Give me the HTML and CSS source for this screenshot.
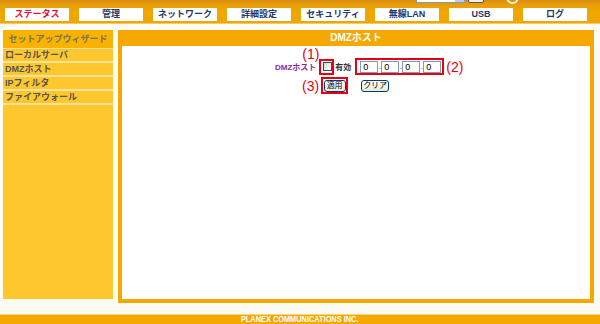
FILE: index.html
```html
<!DOCTYPE html>
<html lang="ja">
<head>
    <meta charset="UTF-8">
    <title>DMZホスト</title>
    <link rel="stylesheet" href="styles.css">
</head>
<body>
    <div class="header">
        <div class="topline">
            <span class="lang-select"><i class="lang-arrow"></i></span>
            <span class="lang-btn"></span>
            <span class="ring"></span>
        </div>
        <ul class="nav">
            <li class="active">ステータス</li>
            <li>管理</li>
            <li>ネットワーク</li>
            <li>詳細設定</li>
            <li>セキュリティ</li>
            <li>無線LAN</li>
            <li>USB</li>
            <li>ログ</li>
        </ul>
    </div>

    <div class="layout">
        <div class="sidebar">
            <div class="side-title">セットアップウィザード</div>
            <div class="side-item first">ローカルサーバ</div>
            <div class="side-item">DMZホスト</div>
            <div class="side-item">IPフィルタ</div>
            <div class="side-item last">ファイアウォール</div>
        </div>

        <div class="panel">
            <div class="panel-title">DMZホスト</div>
            <div class="panel-body">
                <div class="form-row">
                    <span class="field-label">DMZホスト</span>
                    <span class="mark mark-check">
                        <span class="note note-over">(1)</span>
                        <input type="checkbox" class="check">
                    </span>
                    <span class="check-label">有効</span>
                    <span class="mark mark-ip">
                        <input type="text" class="ip" value="0"><span class="dot">.</span><input type="text" class="ip" value="0"><span class="dot">.</span><input type="text" class="ip" value="0"><span class="dot">.</span><input type="text" class="ip" value="0">
                    </span>
                    <span class="note">(2)</span>
                </div>
                <div class="form-row row-buttons">
                    <span class="note">(3)</span>
                    <span class="mark mark-btn"><button class="btn btn-apply">適用</button></span>
                    <button class="btn btn-clear">クリア</button>
                </div>
            </div>
        </div>
    </div>

    <div class="footer"><span class="footer-text">PLANEX COMMUNICATIONS INC.</span></div>
</body>
</html>
```

FILE: styles.css
```css
body {
    margin: 0;
    width: 600px;
    height: 324px;
    overflow: hidden;
    background: #fdfcf4;
    font-family: "Liberation Sans", "Noto Sans CJK JP", sans-serif;
    color: #333;
}

/* ヘッダー */
.header {
    height: 24px;
    background: linear-gradient(to bottom, #d98a12 0, #e99e08 5px, #efa800 12px, #eea600 100%);
    border-bottom: 1px solid #f7c860;
    box-sizing: border-box;
}
.topline {
    height: 8px;
    display: flex;
    align-items: flex-end;
    overflow: hidden;
}
.lang-select {
    position: relative;
    margin: 0 0 5px 416px;
    width: 49px;
    height: 12px;
    box-sizing: border-box;
    background: #fff;
    border: 1px solid #7f9db9;
}
.lang-arrow {
    position: absolute;
    right: 0;
    top: 0;
    width: 9px;
    height: 10px;
    background: #b8cdf0;
}
.lang-btn {
    margin: 0 0 5px 3px;
    width: 16px;
    height: 12px;
    box-sizing: border-box;
    border: 1px solid #556;
    border-radius: 2px;
    background: #f0f0ea;
}
.ring {
    margin: 0 0 4px 22px;
    width: 9px;
    height: 9px;
    border: 2px solid #fff3d8;
    border-radius: 50%;
}
.nav {
    list-style: none;
    margin: 0;
    padding: 0 0 0 5px;
    display: flex;
    gap: 10px;
}
.nav li {
    width: 64px;
    height: 13px;
    line-height: 13px;
    background: #fff;
    text-align: center;
    font-size: 9px;
    font-weight: bold;
    color: #22386a;
}
.nav li.active {
    color: #e8102c;
}

/* 本体 */
.layout {
    display: flex;
    align-items: flex-start;
    gap: 5px;
    padding: 6px 0 0 3px;
}
.sidebar {
    width: 110px;
    height: 269px;
    background: #ffc72e;
}
.side-title {
    height: 18px;
    line-height: 18px;
    background: #f7b300;
    text-align: center;
    font-size: 9px;
    font-weight: bold;
    color: #7b705c;
}
.side-item {
    height: 12px;
    line-height: 12px;
    padding-left: 2px;
    border-top: 2px solid #ffe29a;
    font-size: 9px;
    font-weight: bold;
    color: #555;
}
.side-item.first {
    border-top-width: 1px;
}
.side-item.last {
    border-bottom: 2px solid #ffe29a;
}

.panel {
    width: 476px;
    height: 273px;
    box-sizing: border-box;
    padding: 0 4px 4px;
    background: #f5a800;
    display: flex;
    flex-direction: column;
}
.panel-title {
    height: 16px;
    line-height: 16px;
    text-align: center;
    color: #fff;
    font-size: 10px;
    font-weight: bold;
}
.panel-body {
    flex: 1;
    background: #fff;
    padding: 12px 0 0 153px;
}

/* フォーム */
.form-row {
    display: flex;
    align-items: center;
    height: 17px;
}
.row-buttons {
    margin-top: 2px;
    padding-left: 27px;
}
.field-label {
    flex-shrink: 0;
    white-space: nowrap;
    font-size: 8px;
    font-weight: bold;
    color: #8a2aa0;
    margin-right: 3px;
}
.mark {
    position: relative;
    flex-shrink: 0;
    box-sizing: border-box;
    border: 2px solid #e60012;
    display: flex;
    align-items: center;
}
.mark-check {
    width: 15px;
    height: 16px;
    padding-left: 2px;
}
.check {
    appearance: none;
    margin: 0;
    width: 9px;
    height: 9px;
    border: 1px solid #1c5180;
    background: linear-gradient(135deg, #d8d8d0, #fff);
}
.check-label {
    flex-shrink: 0;
    white-space: nowrap;
    font-size: 8px;
    font-weight: bold;
    color: #333;
    margin: 0 4px 0 1px;
}
.mark-ip {
    width: 89px;
    height: 17px;
    padding-left: 3px;
}
.ip {
    width: 18px;
    height: 12px;
    box-sizing: border-box;
    margin: 0;
    padding: 0 0 0 2px;
    border: 1px solid #7f9db9;
    font-family: "Liberation Sans", sans-serif;
    font-size: 9px;
    color: #000;
}
.dot {
    width: 3px;
    font-size: 8px;
    line-height: 8px;
    align-self: flex-end;
    margin-bottom: 2px;
    text-align: center;
}
.note {
    flex-shrink: 0;
    white-space: nowrap;
    color: #e60012;
    font-size: 14px;
    line-height: 14px;
    margin-left: 2px;
}
.note-over {
    position: absolute;
    left: -21px;
    top: -14px;
}
.row-buttons .note {
    margin: 0 2px 0 0;
}
.mark-btn {
    width: 27px;
    height: 17px;
    justify-content: center;
}
.btn {
    height: 12px;
    padding: 0;
    margin: 0;
    box-sizing: border-box;
    border: 1px solid #003c74;
    border-radius: 3px;
    background: linear-gradient(#fff, #ece9d8);
    font-family: "Liberation Sans", "Noto Sans CJK JP", sans-serif;
    font-size: 8px;
    color: #000;
    line-height: 10px;
}
.btn-apply {
    width: 22px;
}
.btn-clear {
    width: 28px;
    margin-left: 13px;
}

/* フッター */
.footer {
    margin-top: 11px;
    height: 9px;
    background: #f5a800;
    border-top: 1px solid #fbd680;
    display: flex;
    justify-content: center;
    align-items: center;
    color: #fff;
}
.footer-text {
    font-size: 9px;
    line-height: 9px;
    font-weight: bold;
    transform: scaleX(0.82);
}
```
